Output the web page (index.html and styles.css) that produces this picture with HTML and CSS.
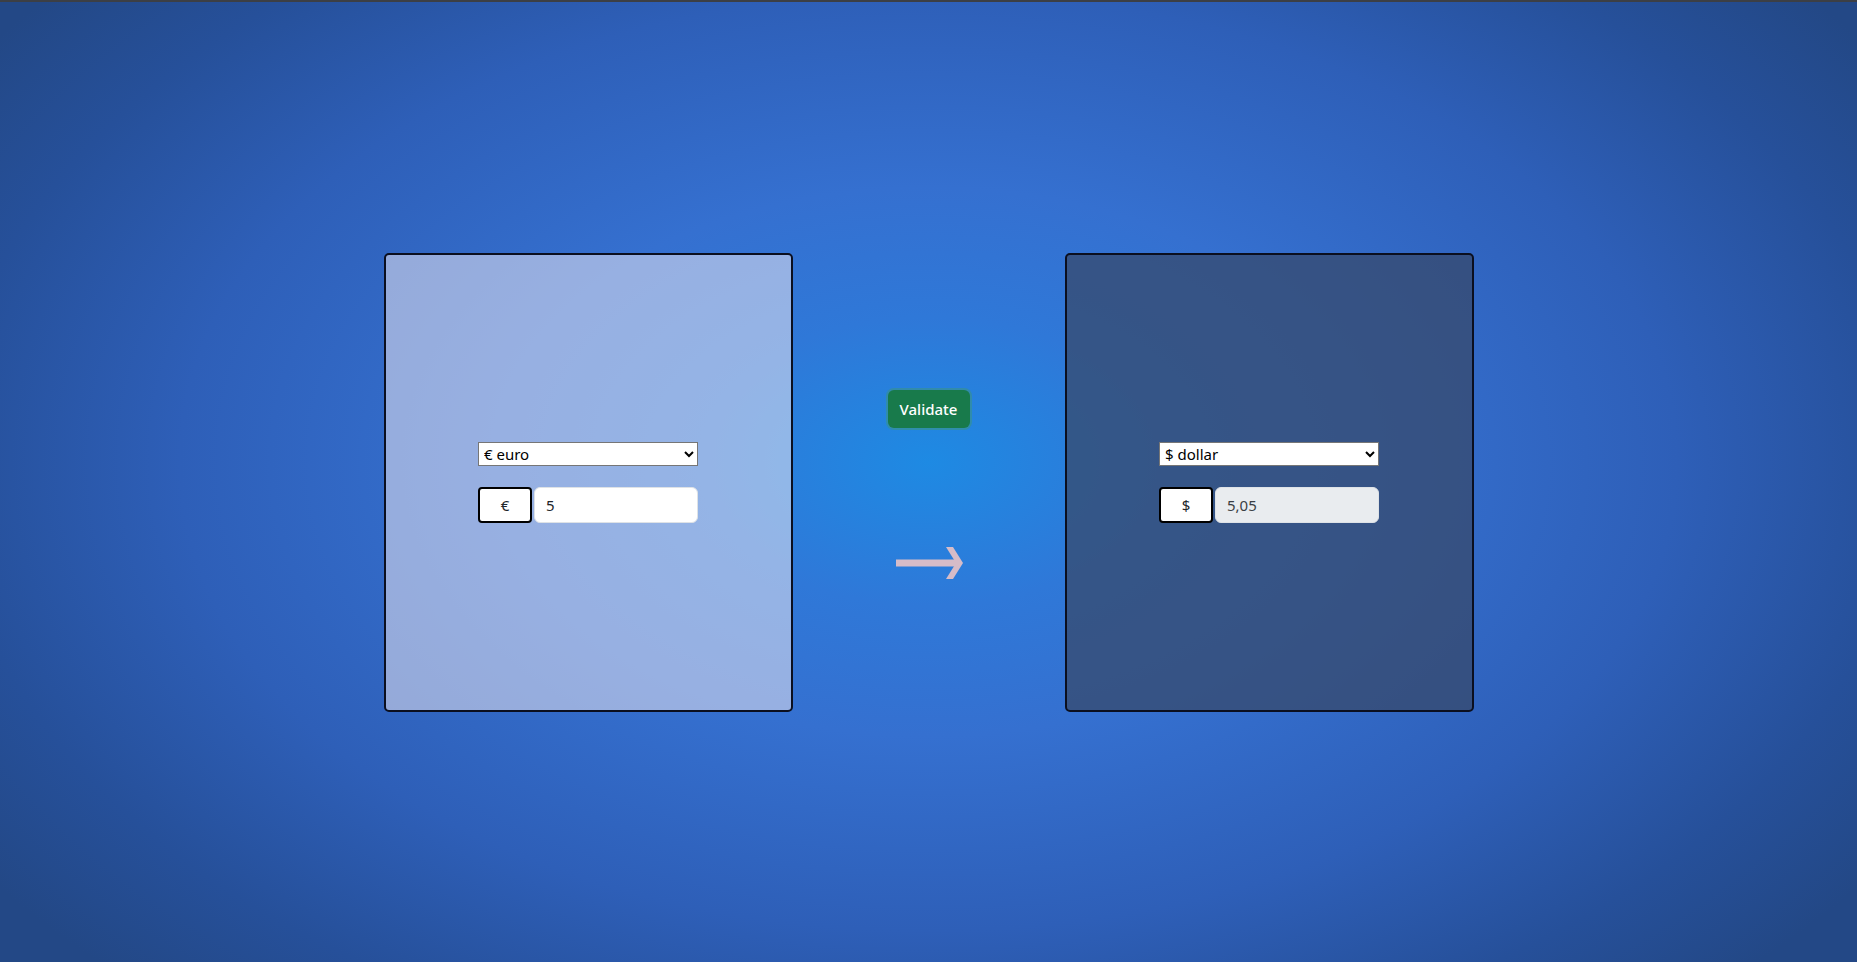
FILE: index.html
```html
<!DOCTYPE html>
<html lang="en">
<head>
<meta charset="utf-8">
<title>Currency converter</title>
<link rel="stylesheet" href="styles.css">
</head>
<body>
<div class="topbar"></div>
<main class="stage">
  <section class="panel panel-from">
    <div class="controls">
      <select class="currency">
        <option selected>€ euro</option>
        <option>$ dollar</option>
      </select>
      <div class="group">
        <span class="addon">€</span>
        <input class="amount" type="text" value="5">
      </div>
    </div>
  </section>
  <div class="middle">
    <button class="validate" type="button">Validate</button>
    <svg class="arrow" width="68" height="34" viewBox="0 0 68 34" aria-hidden="true">
      <rect x="0" y="13.5" width="60" height="7" fill="#d6bcc8"/>
      <polygon points="50,1 57,1 67,17 57,33 50,33 60,17" fill="#d6bcc8"/>
    </svg>
  </div>
  <section class="panel panel-to">
    <div class="controls">
      <select class="currency">
        <option>€ euro</option>
        <option selected>$ dollar</option>
      </select>
      <div class="group">
        <span class="addon">$</span>
        <input class="amount result" type="text" value="5,05" disabled>
      </div>
    </div>
  </section>
</main>
</body>
</html>
```

FILE: styles.css
```css
html, body {
  margin: 0;
  padding: 0;
  height: 100%;
}

body {
  font-family: "Noto Sans", "Open Sans", "Liberation Sans", sans-serif;
  background: radial-gradient(ellipse 62% 75% at 50% 48%, #1e8ae3 0%, #2f78d8 20%, #3570d0 38%, #2e5fb8 65%, #26509a 85%, #234886 100%);
  display: flex;
  flex-direction: column;
  overflow: hidden;
}

.topbar {
  height: 2px;
  background: #3c3f45;
  flex: none;
}

.stage {
  flex: 1;
  display: flex;
  align-items: center;
  justify-content: center;
}

.panel {
  box-sizing: border-box;
  width: 409px;
  height: 459px;
  border: 2px solid #0b0f1f;
  border-radius: 5px;
  display: flex;
  align-items: center;
  justify-content: center;
}

.panel-from {
  background: rgba(250, 240, 244, 0.5);
}

.panel-to {
  background: rgba(56, 72, 104, 0.72);
}

.controls {
  width: 220px;
  display: flex;
  flex-direction: column;
  gap: 21px;
}

.currency {
  box-sizing: border-box;
  width: 220px;
  height: 24px;
  font-family: "Noto Sans", "Open Sans", sans-serif;
  font-size: 15px;
  color: #000;
  background: #fff;
  border: 1px solid #767676;
  border-radius: 0;
  padding: 0 1px;
}

.group {
  display: flex;
  gap: 2px;
  height: 36px;
}

.addon {
  box-sizing: border-box;
  width: 54px;
  flex: none;
  background: #fff;
  border: 2px solid #000;
  border-radius: 4px;
  display: flex;
  align-items: center;
  justify-content: center;
  font-size: 15px;
  color: #212529;
}

.amount {
  box-sizing: border-box;
  flex: 1;
  min-width: 0;
  height: 36px;
  border: 1px solid #dee2e6;
  border-radius: 6px;
  background: #fff;
  padding: 0 11px;
  font-family: "Noto Sans", "Open Sans", sans-serif;
  font-size: 15px;
  color: #212529;
  outline: none;
}

.amount.result {
  background: #e9ecef;
  color: #3a3f44;
}

.middle {
  width: 272px;
  height: 459px;
  display: flex;
  flex-direction: column;
  align-items: center;
  justify-content: center;
  gap: 118px;
  padding-top: 6px;
  box-sizing: border-box;
}

.validate {
  width: 82px;
  height: 38px;
  border: none;
  border-radius: 6px;
  background: #187a4b;
  color: #fff;
  font-family: "Noto Sans", "Open Sans", sans-serif;
  font-size: 15px;
  font-weight: 500;
  box-shadow: 0 0 0 2px rgba(60, 150, 120, 0.5);
  cursor: pointer;
}

.arrow {
  display: block;
  margin-left: 3px;
}
```
